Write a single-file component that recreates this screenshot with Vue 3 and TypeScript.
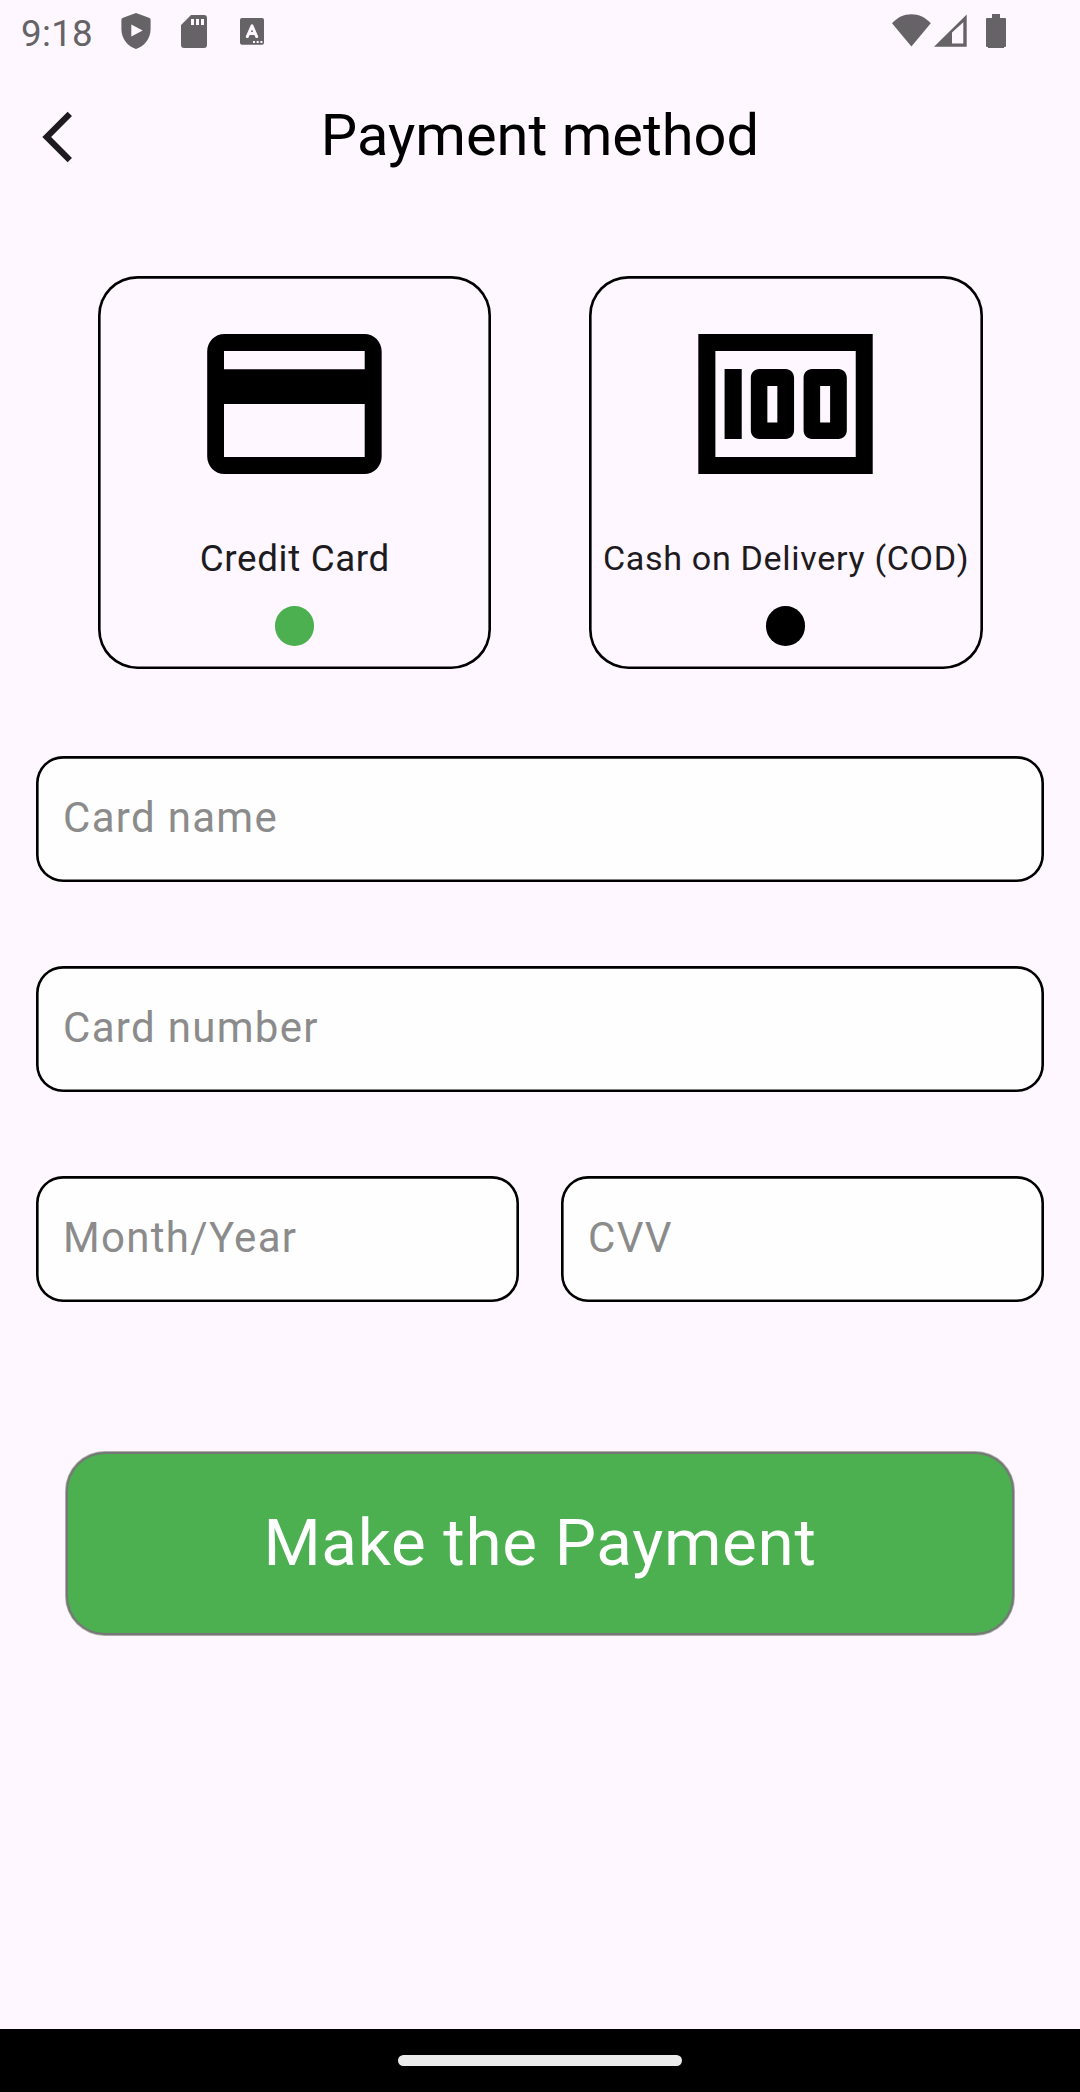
<script setup lang="ts">
import { ref } from 'vue'

type Method = 'card' | 'cod'

const selected = ref<Method>('card')
</script>

<template>
  <div class="screen">
    <div class="status">
      <span class="time">9:18</span>
      <svg class="shield" width="30" height="36" viewBox="0 0 30 36">
        <path fill-rule="evenodd" d="M15 0 28 4.8q1.6.6 1.6 2.2V16C29.6 26 23 33.600 15 36 7 33.600.4 26 .4 16V7q0-1.600 1.600-2.200ZM10.300 11.400v12.200l11.400-6.100Z" />
      </svg>
      <svg class="sd" width="26" height="33" viewBox="0 0 26 33">
        <path fill-rule="evenodd" d="M10 0H23q3 0 3 3V30q0 3-3 3H3q-3 0-3-3V10ZM10 4v6h3V4ZM15 4v6h3V4ZM20 4v6h3V4Z" />
      </svg>
      <svg class="letter" width="24" height="27" viewBox="0 0 24 27">
        <rect width="24" height="26.700" rx="2" />
        <path d="M7.300 18.600 12 7.800l4.700 10.800M9 15.500h6" fill="none" stroke="#fef7ff" stroke-width="2.900" stroke-linecap="round" stroke-linejoin="round" />
        <path d="M13 23h2v2h-2ZM16.700 23h2v2h-2ZM20.400 23h2v2h-2Z" fill="#fef7ff" />
      </svg>
      <span class="spacer"></span>
      <svg class="wifi" width="39" height="33" viewBox="0 0 39 33">
        <path d="M0 9.200C5.300 3.400 12 .2 19.400.2S33.500 3.400 38.800 9.200L19.400 32.600Z" />
      </svg>
      <svg class="signal" width="33" height="33" viewBox="0 0 33 33">
        <path fill-rule="evenodd" d="M0 32.800 32.700.5V32.800ZM18 18.500V29.500H29.300V8.300Z" />
      </svg>
      <svg class="battery" width="20" height="34" viewBox="0 0 20 34">
        <path d="M6 0h8v4h5q1 0 1 1V32q0 1-1 1h-1v1H2v-1H1q-1 0-1-1V5q0-1 1-1h5Z" />
      </svg>
    </div>

    <header class="appbar">
      <button class="back" type="button" aria-label="Back">
        <svg width="32" height="52" viewBox="0 0 32 52">
          <path d="M27.800 2.900 4.700 26 27.800 49.100" fill="none" stroke="#1d1b20" stroke-width="6.200" />
        </svg>
      </button>
      <h1>Payment method</h1>
    </header>

    <div class="methods">
      <div class="method" @click="selected = 'card'">
        <svg width="210" height="210" viewBox="0 0 24 24">
          <path d="M20.060 4H4.060c-1.110 0-1.980.89-1.980 2v12c0 1.110.87 2 1.980 2h15.980c1.110 0 1.980-.89 1.980-2V6c0-1.110-.87-2-1.980-2zm.02 14.060H4V12h16.080zm0-10.030H4V5.940h16.080z" />
        </svg>
        <span class="name">Credit Card</span>
        <span class="dot" :class="{ on: selected === 'card' }"></span>
      </div>
      <div class="method" @click="selected = 'cod'">
        <svg width="210" height="210" viewBox="0 0 24 24">
          <path fill-rule="evenodd" transform="translate(-.05 0)" d="M2.030 4v16h19.930V4zM3.980 18.060V5.940h16.040v12.120zM5.030 8h1.960v8H5.030zM9 8h3c.55 0 .97.450.97 1v6c0 .55-.42 1-.97 1H9c-.55 0-.97-.45-.97-1V9c0-.55.42-1 .97-1zm.92 1.940v4.180h1.140V9.940zM15.030 8h3c.55 0 .97.450.97 1v6c0 .55-.42 1-.97 1h-3c-.55 0-.97-.45-.97-1V9c0-.55.42-1 .97-1zm.92 1.940v4.180h1.140V9.940z" />
        </svg>
        <span class="name small">Cash on Delivery (COD)</span>
        <span class="dot" :class="{ on: selected === 'cod' }"></span>
      </div>
    </div>

    <form class="fields" @submit.prevent>
      <div class="field"><span>Card name</span></div>
      <div class="field"><span>Card number</span></div>
      <div class="pair">
        <div class="field"><span>Month/Year</span></div>
        <div class="field"><span>CVV</span></div>
      </div>
      <button class="pay" type="submit">Make the Payment</button>
    </form>

    <div class="navbar"><span class="pill"></span></div>
  </div>
</template>

<style>
body {
  margin: 0;
  background: #fef7ff;
}
</style>

<style scoped>
.screen {
  width: 1080px;
  height: 2092px;
  display: flex;
  flex-direction: column;
  background: #fef7ff;
  color: #1d1b20;
  font-family: Roboto, sans-serif;
  overflow: hidden;
}
svg {
  display: block;
  flex: none;
}
.status {
  height: 63px;
  display: flex;
  align-items: flex-start;
  padding: 0 74px 0 21px;
  fill: #666367;
  color: #666367;
}
.time {
  width: 100px;
  font-size: 36.75px;
  letter-spacing: 0.3px;
  line-height: 43px;
  padding-top: 12px;
}
.shield { margin-top: 13.400px; }
.sd { margin: 15px 0 0 30px; }
.letter { margin: 18px 0 0 33px; }
.spacer { flex: 1; }
.wifi { margin-top: 14px; }
.signal { margin: 14px 0 0 3px; }
.battery { margin: 14px 0 0 19px; }

.appbar {
  height: 147px;
  display: grid;
  grid-template-columns: 147px 1fr 147px;
  align-items: center;
}
.back {
  border: 0;
  background: none;
  padding: 0 0 0 42px;
}
h1 {
  margin: 0;
  padding-bottom: 4px;
  font-size: 57.750px;
  line-height: 74px;
  font-weight: 400;
  color: #000;
  text-align: center;
}
.methods {
  margin-top: 65.600px;
  display: flex;
  justify-content: space-evenly;
}
.method {
  box-sizing: border-box;
  width: 393.750px;
  height: 393.750px;
  border-radius: 39.400px;
  box-shadow: inset 0 0 0 2.625px #000;
  padding-top: 23.600px;
  display: flex;
  flex-direction: column;
  align-items: center;
}
.method svg { fill: #000; }
.name {
  margin-top: 24px;
  padding-left: 1px;
  height: 52px;
  line-height: 52px;
  font-size: 36.750px;
  letter-spacing: 0.656px;
  white-space: nowrap;
}
.name.small {
  font-size: 34.125px;
  line-height: 50px;
}
.dot {
  margin-top: 21px;
  width: 39.375px;
  height: 39.375px;
  border-radius: 50%;
  background: #000;
}
.dot.on { background: #4caf50; }

.fields {
  margin: 86.650px 36px 0;
  display: flex;
  flex-direction: column;
}
.field {
  box-sizing: border-box;
  flex: 1;
  min-height: 126px;
  margin-bottom: 84px;
  padding: 0 27px;
  border-radius: 27px;
  background: #fffeff;
  box-shadow: inset 0 0 0 2.625px #000;
  font-size: 42px;
  letter-spacing: 1.3125px;
  line-height: 124px;
  color: #8b8b8b;
}
.pair {
  display: flex;
  gap: 42px;
}
.pay {
  margin: 66px 30px 0;
  height: 183px;
  padding: 0;
  border: 0;
  border-radius: 39px;
  background: #4caf50;
  box-shadow: inset 0 0 0 2px #777, 0 0 0 1px rgba(119, 119, 119, 0.6);
  color: #fff;
  font: 400 65.625px/80px Roboto, sans-serif;
  letter-spacing: 0.656px;
}
.navbar {
  margin-top: auto;
  height: 63px;
  background: #000;
  display: flex;
  align-items: flex-start;
  justify-content: center;
}
.pill {
  margin-top: 26px;
  width: 284px;
  height: 11px;
  border-radius: 6px;
  background: #ebebeb;
}
</style>
